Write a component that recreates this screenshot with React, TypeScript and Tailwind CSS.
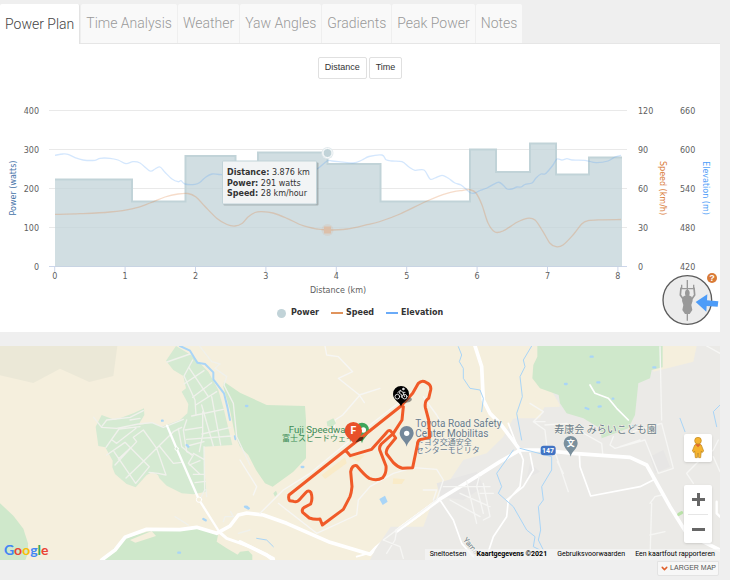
import React from 'react';
import { ChevronDown } from 'lucide-react';

type Point = [number, number];

const tabs = ['Power Plan', 'Time Analysis', 'Weather', 'Yaw Angles', 'Gradients', 'Peak Power', 'Notes'];

const speed: Point[] = [
  [55, 214.4], [80, 213.7], [110, 212], [133, 208.6], [150, 203], [165, 197], [178, 194], [188, 193.5],
  [196, 197], [205, 206.5], [217, 218.5], [227, 224.5], [235, 226], [242, 223.5], [248, 217], [255, 212.5],
  [262, 211.7], [273, 213], [287, 218.3], [303, 225.7], [317, 229], [327, 230], [347, 229], [367, 224.7],
  [380, 221.5], [400, 214], [427, 201], [447, 193.3], [463, 190.3], [470, 189.7], [476, 193], [482, 205],
  [488, 223], [495, 232], [503, 231], [517, 222.3], [527, 218.3], [535, 220], [543, 231.7], [550, 243.3],
  [556, 246.7], [563, 245], [573, 235], [582, 223.7], [588, 220.7], [600, 219.8], [621, 219.5],
];

const elevation: Point[] = [
  [55, 155.3], [63, 154], [68, 154.3], [75, 157.7], [83, 160], [95, 160.3], [100, 158.3], [110, 158.3],
  [118, 160], [126, 163.7], [133, 161.7], [140, 163], [150, 171], [155, 169], [160, 167], [165, 172.3],
  [172, 179], [178, 181.7], [181, 180.7], [185, 184], [195, 184.3], [200, 182.3], [205, 177.7], [212, 174],
  [222, 174.7], [250, 176], [280, 175], [305, 174], [317, 169], [327, 161], [332, 161], [353, 163],
  [362, 160], [369, 156.5], [382, 155], [386, 159.7], [392, 161], [402, 161.7], [409, 167], [415, 170.3],
  [424, 170], [430, 179], [435, 178], [442, 175.3], [448, 178], [455, 183], [461, 185], [467, 190],
  [471, 193], [475, 193], [480, 190.5], [487, 188], [498, 182.3], [503, 185], [507, 189], [512, 189],
  [517, 187], [521, 187], [525, 184.5], [532, 183], [536, 178], [541, 174], [545, 174], [549, 170],
  [553, 165], [557, 159], [562, 160], [567, 158.7], [572, 160], [585, 160.3], [596, 162.7], [608, 161],
  [615, 157], [621, 155.3],
];

const powerLine =
  'M55 179.5H132V201.5H185.5V156H235.5V173H258V152.5H327.5V164H380.5V201.5H470V149.5H496V172H530V143.5H556V174.5H589V157.5H622';

const rows = [
  { y: 111, power: '400', speed: '120', elevation: '660' },
  { y: 150, power: '300', speed: '90', elevation: '600' },
  { y: 189, power: '200', speed: '60', elevation: '540' },
  { y: 228, power: '100', speed: '30', elevation: '480' },
  { y: 267, power: '0', speed: '0', elevation: '420' },
];

// Catmull-Rom spline through all points
function spline(points: Point[]) {
  let d = `M${points[0][0]} ${points[0][1]}`;
  for (let i = 0; i < points.length - 1; i++) {
    const p0 = points[i - 1] || points[i];
    const p1 = points[i];
    const p2 = points[i + 1];
    const p3 = points[i + 2] || p2;
    d += `C${p1[0] + (p2[0] - p0[0]) / 6} ${p1[1] + (p2[1] - p0[1]) / 6} ${p2[0] - (p3[0] - p1[0]) / 6} ${p2[1] - (p3[1] - p1[1]) / 6} ${p2[0]} ${p2[1]}`;
  }
  return d;
}

const Chart: React.FC = () => (
  <svg viewBox="0 80 720 220" className="mt-px block h-auto w-full font-['DejaVu_Sans',sans-serif] text-[8px]" role="img" aria-label="Power, speed and elevation by distance">
    {rows.map((row) => (
      <g key={row.y} fill="#606060">
        <path d={`M49 ${row.y - 0.5}H627`} stroke={row.y === 267 ? '#ccd6eb' : '#e9e9e9'} />
        <text x="39" y={row.y + 3} textAnchor="end">{row.power}</text>
        <text x="638" y={row.y + 3}>{row.speed}</text>
        <text x="680" y={row.y + 3}>{row.elevation}</text>
      </g>
    ))}
    {[0, 1, 2, 3, 4, 5, 6, 7, 8].map((km) => (
      <g key={km} fill="#606060">
        <path d={`M${54.7 + km * 70.4} 267v6`} stroke="#ccd6eb" />
        <text x={54.7 + km * 70.4} y="279" textAnchor="middle">{km}</text>
      </g>
    ))}
    <path d={`${powerLine}V266.500H55Z`} fill="#c1d3d8" fillOpacity="0.75" />
    <path d={powerLine} fill="none" stroke="#c1d3d8" strokeWidth="2" />
    <path d={spline(speed)} fill="none" stroke="#e08040" strokeOpacity="0.28" strokeWidth="1.3" />
    <path d={spline(elevation)} fill="none" stroke="#4d9cf8" strokeOpacity="0.24" strokeWidth="1.3" />
    <circle cx="327.500" cy="153" r="6" fill="#e3ebee" />
    <circle cx="327.500" cy="153" r="4.500" fill="#c1d3d8" stroke="#fff" />
    <circle cx="327.500" cy="230" r="6" fill="#e08040" fillOpacity="0.1" />
    <rect x="324" y="226.500" width="7" height="7" fill="#dcbfa9" />

    <text x="338" y="293" textAnchor="middle" fill="#606060">Distance (km)</text>
    <text transform="translate(16 188) rotate(-90)" textAnchor="middle" fill="#4572a7">Power (watts)</text>
    <text transform="translate(660 188) rotate(90)" textAnchor="middle" fill="#d97b38">Speed (km/h)</text>
    <text transform="translate(703 188) rotate(90)" textAnchor="middle" fill="#4d9cf8">Elevation (m)</text>

    <g fill="#333">
      <rect x="223.500" y="162.500" width="95" height="43" rx="1" fill="#000" fillOpacity="0.2" />
      <rect x="222.500" y="161" width="94" height="43" rx="1" fill="#f2f4f5" stroke="#c1d3d8" />
      <text x="227" y="175"><tspan className="font-bold">Distance:</tspan> 3.876 km</text>
      <text x="227" y="186"><tspan className="font-bold">Power:</tspan> 291 watts</text>
      <text x="227" y="196"><tspan className="font-bold">Speed:</tspan> 28 km/hour</text>
    </g>
  </svg>
);

const WindCompass: React.FC = () => (
  <div className="absolute right-0 bottom-[6px] h-[54px] w-[58px]">
    <svg viewBox="246 531 174 162" className="h-full w-full">
      <circle cx="322" cy="615" r="73" fill="#ececec" stroke="#5c5c5c" strokeWidth="4" />
      <path d="M322 555V677" stroke="#999" strokeWidth="4" />
      <path d="M305 569V581H341V569" stroke="#999" strokeWidth="4" fill="none" />
      <path d="M303 578L301 600L313 617M342 578L344 600L332 617" stroke="#999" strokeWidth="5" fill="none" />
      <ellipse cx="322" cy="594" rx="7" ry="10" fill="#999" />
      <path d="M309 605Q322 595 335 605L338 617L334 630L337 645L329 657H315L307 645L310 630L306 617Z" fill="#999" />
      <path d="M347 621L382 598L381 616L415 619L413 635L380 633L379 650Z" fill="#4d9cf8" />
    </svg>
    <button aria-label="Help" className="absolute top-px right-[3px] flex size-[10px] items-center justify-center rounded-full bg-[#d97b38] font-['Liberation_Sans',sans-serif] text-[9px] leading-none font-bold text-white">
      ?
    </button>
  </div>
);

const Pin: React.FC<{ x: number; y: number; color: string }> = ({ x, y, color }) => (
  <path transform={`translate(${x} ${y})`} d="M0 38C-3 22 -21 14 -21 -3A21 21 0 0 1 21 -3C21 14 3 22 0 38Z" fill={color} />
);

const MapCanvas: React.FC = () => (
  <svg viewBox="0 18 2160 642" preserveAspectRatio="xMidYMid slice" className="absolute inset-0 h-full w-full font-[Roboto,'Noto_Sans_CJK_JP',sans-serif]" strokeLinejoin="round" strokeLinecap="round">
    <rect y="18" width="2160" height="642" fill="#f5efdd" />

    {/* west side */}
    <path d="M0 18H352L340 108L268 126L180 86L100 129L0 106Z" fill="#ebe8d7" />
    <path d="M0 490L40 527L70 566L84 610V640L76 660H0Z" fill="#cfe8cb" />
    <path d="M528 18L578 48L625 95L655 150L672 210L697 315L612 320L614 400L619 455L580 463L545 460L500 437L478 415L474 405L458 396L440 405L407 442L380 432L345 402L337 382L338 362L316 322L295 318L287 260L305 225L345 240L400 220L432 205L433 225L415 255L456 248L485 260L540 240L562 220L565 192L545 155L558 145L550 108L520 90L498 62Z" fill="#d5ead2" />
    <path d="M390 590L460 570L540 568L585 562L655 580L650 605L680 625L740 660H310L365 600Z" fill="#cfe8cb" />
    <path d="M390 600L455 573L468 588L406 608Z" fill="#f5efdd" />
    <path d="M672 125L720 158L800 195L915 198L918 240L918 355L880 395L818 440L795 430L768 390L745 345L720 320L705 285L690 210L670 140Z" fill="#cfe8cb" />
    <path d="M720 635L745 632L757 645V660H700Z" fill="#cfe8cb" />
    <g fill="none" stroke="#f0f1ec" strokeWidth="4">
      <path d="M501 66L570 42M578 60L552 108L585 180L588 225M567 83L625 170M552 132L612 92M578 172L635 128M587 195L650 155M575 228L670 208M560 240L550 270L560 335L580 345L565 370L600 403M560 298L695 288M555 270L605 262M562 318L612 305M605 195L640 318M635 170L662 315M608 215V285L598 335M606 282L692 262M580 340L612 358M568 375L600 362M580 403H612M585 428L616 424" />
      <path d="M281 232L305 262L350 265L415 252L456 248L490 262L550 238M318 322L357 267M336 300L350 310L408 265M357 267L420 260M320 345L375 307L448 380L407 430L342 335M355 357L390 325M378 414L432 362L470 325L520 275L545 262M430 270L400 292L410 305L345 375M430 270L470 325L498 405L474 400L447 397M478 318L520 370L545 367M535 265L545 320L575 345M612 320L614 450L600 478" />
      <path d="M305 260L320 240L390 232L430 212M390 240L420 235M600 20L635 65L660 72L645 85L680 110L672 135L700 190L710 290L750 375M620 470L618 448M525 530L565 555M670 545L675 530L700 530L692 515M715 580L750 570" />
    </g>
    <g fill="none" stroke="#a9d5f7" strokeWidth="5">
      <path d="M540 18L570 32L592 68L615 72L640 97V118L672 160L683 205L690 240" strokeWidth="6" />
      <path d="M704 288L706 298" />
      <path d="M486 242H488M560 315L565 320M610 537L617 541M740 500L746 505M535 638H540M738 198H742" strokeWidth="7" />
    </g>
    <g fill="none" stroke="#fff">
      <path d="M501 257L530 326L597 479L658 576" strokeWidth="7" />
      <path d="M305 660L345 630L375 592L440 568L540 569L590 562L650 580L690 558L715 525L740 519L790 525L860 550L990 607L1110 643L1130 622L1190 573L1320 477L1440 403" strokeWidth="11" />
      <path d="M658 576L680 595L750 620L820 655" strokeWidth="9" />
      <circle cx="530" cy="326" r="5" fill="#d5ead2" strokeWidth="3" />
      <circle cx="597" cy="479" r="8" fill="#f5efdd" strokeWidth="3" />
    </g>

    {/* town and east side */}
    <path d="M1172 560L1270 560L1300 480L1330 460L1350 420L1390 360L1460 340L1510 290L1540 235H1620L1675 90L1700 18H2160V660H1110L1125 630Z" fill="#ebeae7" />
    <path d="M1440 18H1612L1600 90L1625 200L1675 190L1680 200L1590 203L1545 235L1500 235L1480 310L1440 345Z" fill="#f5efdd" />
    <path d="M1575 18L1680 195L1620 203L1575 100Z" fill="#f5efdd" />
    <path d="M1960 18H2090L2080 65L1960 95Z" fill="#f5efdd" />
    <path d="M1612 18H1988V82L1955 90L1950 115L1915 130L1912 158L1905 225L1885 265L1805 295L1800 265L1750 235L1700 220L1680 190L1676 165L1620 145L1597 115L1600 75L1612 50Z" fill="#cfe8cb" />
    <path d="M1310 430L1430 395L1450 440L1390 480L1320 470ZM1590 370L1620 395L1580 415ZM1990 330L2010 380L1965 400L1950 350Z" fill="#e7e6e5" />
    <path d="M1190 573L1320 477L1440 403" fill="none" stroke="#fff" strokeWidth="11" />
    <g fill="none" stroke="#f6f6f4" strokeWidth="4">
      <path d="M975 18L980 45L1015 50L1058 95L1015 115L1078 165L1140 145M1080 165L1028 225L1005 240L1000 290M1078 165L1093 188M1200 185L1045 305L930 400L850 450L780 520M1070 525L1075 480L1110 440L1180 400L1240 383L1310 388L1330 420L1310 480L1150 600M1270 170L1310 225L1330 260M835 490L950 580L1070 525M720 360L770 440L760 465" />
      <path d="M1300 480L1310 450L1270 450M1440 400L1430 440L1450 520M1400 425L1430 550M1330 440L1470 440M1380 460L1470 500M1350 480L1440 530M1190 570L1185 600L1160 640M1150 600L1200 620L1210 655M1590 190L1630 215L1600 245L1635 270L1640 315M1605 245H1635M1635 255L1700 250L1760 285L1805 310L1808 340M1660 320L1705 455M1672 365L1690 400M1840 290L1830 315L1845 325L1935 300L1975 400L2020 385L1985 250L1900 275M1950 490L1965 470L1985 465M1955 490L1950 655M1950 585L1995 575M1980 20L1985 240M2080 430L2060 400L2090 370L2140 330L2155 300M2120 18L2160 40M2140 350L2160 395M1860 320L1920 300M1450 430L1470 530L1450 540M1440 460H1480" />
    </g>
    <g fill="none" stroke="#fff" strokeWidth="5">
      <path d="M1320 480L1360 540L1385 610L1420 650M1560 335L1570 360L1560 440L1525 480L1520 530L1480 590L1460 650M1590 340L1600 390L1570 440L1520 480M1738 340L1740 380L1772 468L1920 440L1960 420M1525 250L1560 340M1105 640L1070 650M1770 135L1785 160L1825 175L1850 205L1885 240" />
    </g>
    <g fill="none" stroke="#fff" strokeWidth="11">
      <path d="M1425 18L1445 80L1450 180L1470 220L1500 250L1560 330" />
      <path d="M1440 403L1500 365L1560 330L1620 330L1720 340L1890 352L1940 375L2010 500L2060 580L2160 630" />
      <path d="M720 606L800 645L820 660" />
      <path d="M2150 485V520L2160 530" strokeWidth="7" />
    </g>
    <g fill="none" stroke="#a9d5f7" strokeWidth="3">
      <path d="M1375 20L1385 45L1378 65L1390 85V115L1410 145L1440 150L1450 175L1445 215M1595 18L1570 60L1575 80L1560 110L1567 170L1550 220L1565 300M1540 330L1490 400L1505 440L1495 460L1540 500L1580 570L1605 590L1600 620L1620 630M1560 325L1655 350L1655 390L1625 440L1630 480L1615 500L1622 570L1615 600L1630 630M2040 235L2055 275M2160 195L2140 215L2150 260M770 595L800 600L820 620" />
      <path d="M1772 50H1778M1960 82H1966M1792 127H1798M1695 132H1700M1757 204L1765 207M1796 200L1802 199M1838 176H1840M1900 258L1910 257M735 500L745 505M905 381H910" strokeWidth="7" />
    </g>
    <path d="M1138 477L1155 467L1163 485L1148 495Z" fill="#a9d5f7" />
    <path d="M965 405L1035 352L1040 370L975 417ZM1180 415L1215 418L1205 432H1178ZM1045 350L1095 345L1075 365Z" fill="#f9ebc8" />
    <path d="M980 245L1000 235L1008 250L995 262L982 258ZM820 460L828 452L832 462L825 470Z" fill="#cfe8cb" />
    <path d="M2036 523L2045 518" stroke="#b9e2a8" strokeWidth="9" />

    {/* place names */}
    <g fill="#3c8b57">
      <text x="866" y="278" fontSize="29">Fuji Speedway</text>
      <text x="846" y="303" fontSize="24">富士スピードウェイ</text>
    </g>
    <g fill="#6a7d8c" stroke="#f5f2e8" strokeWidth="4" paintOrder="stroke">
      <text x="1246" y="262" fontSize="30">Toyota Road Safety</text>
      <text x="1246" y="292" fontSize="30">Center Mobilitas</text>
      <text x="1247" y="316" fontSize="24">トヨタ交通安全</text>
      <text x="1247" y="340" fontSize="24">センターモビリタ</text>
      <text x="1663" y="278" fontSize="30">寿康会 みらいこども園</text>
      <text transform="translate(1388 600) rotate(50)" fontSize="23">Yama</text>
    </g>
    <Pin x={1220} y={282} color="#74889a" />
    <circle cx="1220" cy="280" r="8" fill="#fff" />
    <Pin x={1712} y={312} color="#7a8f9c" />
    <text x="1712" y="319" textAnchor="middle" fontSize="24" fontWeight="bold" fill="#fff">文</text>
    <rect x="1622" y="317" width="45" height="29" rx="9" fill="#4173c4" />
    <text x="1644" y="339" textAnchor="middle" fontSize="21" fontWeight="bold" fill="#fff">147</text>
    <Pin x={1086} y={272} color="#3ea65c" />
    <circle cx="1090" cy="270" r="8" fill="#fff" />

    {/* course */}
    <g transform="translate(720 0)">
      <path
        d="M147 465L483 198L518 160L535 130Q546 119 558 127Q575 134 572 150L566 175Q553 183 556 202L566 240L569 292L545 298Q533 298 532 315L518 383L487 385Q474 382 460 368L440 342Q436 334 444 322L467 294L452 273Q445 268 438 280L395 328L331 347L318 332M490 200L486 240L460 280L424 312Q416 322 420 332L438 378Q440 400 428 413Q410 424 388 415Q376 408 350 377Q336 374 332 395L336 440Q334 460 330 470L310 508L247 555L240 537Q225 540 208 534L188 517Q184 508 193 502L212 492Q219 475 213 458Q206 448 197 458L182 475Q172 488 160 484L149 482Q144 476 147 465"
        fill="none"
        stroke="#f05a28"
        strokeWidth="9"
      />
      <ellipse cx="500" cy="181" rx="16" ry="7" fill="#333" fillOpacity="0.5" transform="rotate(-15 500 181)" />
      <path d="M483 200C480 186 459 181 459 162A24 24 0 0 1 507 162C507 181 486 186 483 200Z" fill="#000" />
      <g fill="none" stroke="#fff" strokeWidth="2.500">
        <circle cx="472" cy="170" r="7" />
        <circle cx="494" cy="170" r="7" />
        <path d="M473 158L481 151L489 157H495M481 152L478 160L485 164V172M489 158L494 170" />
        <circle cx="490" cy="147" r="2.500" fill="#fff" />
      </g>
      <path d="M340 310L350 293L370 290Q372 300 358 304Z" fill="#5a2c18" />
      <path d="M343 314C338 300 314 292 314 272A26 26 0 0 1 366 272C366 292 348 298 343 314Z" fill="#e8502a" />
      <text x="340" y="283" textAnchor="middle" fontSize="31" fontWeight="bold" fill="#fff">F</text>
    </g>
  </svg>
);

const MapPanel: React.FC = () => (
  <div className="relative mt-[14px] h-[214px] overflow-hidden font-[Roboto,sans-serif]">
    <MapCanvas />
    <a href="#google" aria-label="Google" className="absolute bottom-px left-1 font-[Lato,sans-serif] text-[14px] leading-[18px] font-bold">
      <span className="text-[#4285f4]">G</span>
      <span className="text-[#ea4335]">o</span>
      <span className="text-[#fbbc05]">o</span>
      <span className="text-[#4285f4]">g</span>
      <span className="text-[#34a853]">l</span>
      <span className="text-[#ea4335]">e</span>
    </a>
    <button aria-label="Street View" className="absolute right-2 bottom-[98px] flex size-7 items-center justify-center rounded-xs bg-white shadow">
      <svg viewBox="0 0 40 66" className="h-[22px] w-[14px]">
        <path d="M10 24Q20 18 30 24L37 42L32 47L30 42L28 62H22L20 48L18 62H12L10 42L8 47L3 42Z" fill="#f5b32f" stroke="#bd8720" strokeWidth="2" />
        <path d="M11 22H29L20 31Z" fill="#e0662c" />
        <circle cx="20" cy="11" r="10" fill="#f5b32f" stroke="#bd8720" strokeWidth="2" />
      </svg>
    </button>
    <div className="absolute right-2 bottom-[17px] flex w-7 flex-col items-center rounded-xs bg-white shadow">
      <button aria-label="Zoom in" className="flex h-[29px] w-full items-center justify-center">
        <svg viewBox="0 0 13 13" className="size-[13px]"><path d="M6.500 0V13M0 6.500H13" stroke="#666" strokeWidth="3" /></svg>
      </button>
      <div className="h-px w-5 bg-[#e6e6e6]" />
      <button aria-label="Zoom out" className="flex h-7 w-full items-center justify-center">
        <svg viewBox="0 0 13 13" className="size-[13px]"><path d="M0 6.500H13" stroke="#666" strokeWidth="3" /></svg>
      </button>
    </div>
    <div className="absolute right-0 bottom-0 flex text-[7px] leading-[11px] text-black">
      <button className="bg-[#f5f5f5]/70 px-[5px]">Sneltoetsen</button>
      <span className="bg-[#f5f5f5]/70 px-[5px] font-bold">Kaartgegevens ©2021</span>
      <a href="#terms" className="bg-[#f5f5f5]/70 px-[5px]">Gebruiksvoorwaarden</a>
      <a href="#report" className="bg-[#f5f5f5]/70 px-[5px]">Een kaartfout rapporteren</a>
    </div>
  </div>
);

export default function App() {
  return (
    <div className="min-h-screen bg-[#efefef] pt-1 pr-[10px] font-['Liberation_Sans',sans-serif]">
      <nav className="flex gap-px border-b border-[#e6e6e6]" role="tablist">
        {tabs.map((tab, i) => (
          <button
            key={tab}
            role="tab"
            aria-selected={i === 0}
            className={
              i === 0
                ? "-mb-px h-10 rounded-t-xs border-r border-[#e3e3e3] bg-white px-[5px] font-[Roboto,sans-serif] text-[14px] font-light whitespace-nowrap text-[#444]"
                : "h-[39px] rounded-t-xs bg-[#f9f9f9] px-[5px] font-[Roboto,sans-serif] text-[14px] font-light whitespace-nowrap text-[#999]"
            }
          >
            {tab}
          </button>
        ))}
      </nav>

      <section className="relative bg-white pt-[13px] pb-[11px]">
        <div className="flex justify-center gap-[2px] text-[9px] text-[#333]">
          <button className="h-[22px] rounded-xs border border-[#e0e0e0] bg-white px-[6px]">Distance</button>
          <button className="h-[22px] rounded-xs border border-[#e0e0e0] bg-white px-[6px]">Time</button>
        </div>
        <Chart />
        <div className="mt-[5px] flex h-4 items-center justify-center gap-[12px] font-['DejaVu_Sans',sans-serif] text-[8px] font-bold text-[#333]">
          <button className="flex items-center gap-[5px]"><span className="size-[9px] rounded-full bg-[#c1d3d8]" />Power</button>
          <button className="flex items-center gap-[3px]"><span className="h-[2px] w-3 bg-[#e0935c]" />Speed</button>
          <button className="flex items-center gap-[3px]"><span className="h-[2px] w-3 bg-[#6aabf8]" />Elevation</button>
        </div>
        <WindCompass />
      </section>

      <MapPanel />
      <div className="flex justify-end">
        <button className="mt-px mr-px flex h-[15px] items-center gap-px rounded-b-xs border border-[#e3e3e3] bg-[#f7f7f7] px-[2px] text-[7px] text-[#555]">
          <ChevronDown className="size-[9px] text-[#e0602c]" strokeWidth={4} />
          LARGER MAP
        </button>
      </div>
    </div>
  );
}
